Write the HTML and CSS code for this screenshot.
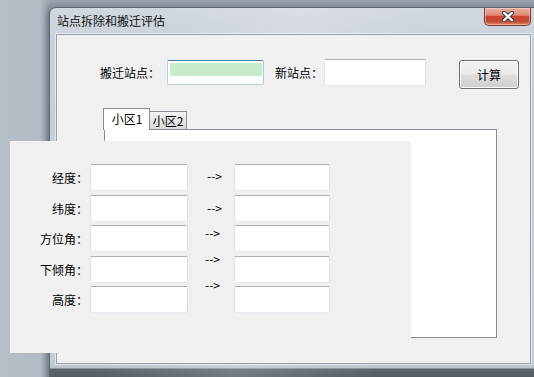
FILE: index.html
```html
<!DOCTYPE html>
<html lang="zh-CN">
<head>
<meta charset="utf-8">
<title>站点拆除和搬迁评估</title>
<link rel="stylesheet" href="styles.css">
</head>
<body>
<div class="window">
  <div class="titlebar">
    <span class="title">站点拆除和搬迁评估</span>
    <div class="close">
      <svg width="14" height="11" viewBox="0 0 14 11">
        <path d="M3 1.8 L11 9.2 M11 1.8 L3 9.2" stroke="#3a3f46" stroke-width="4.2" stroke-linecap="round"/>
        <path d="M3 1.8 L11 9.2 M11 1.8 L3 9.2" stroke="#ffffff" stroke-width="2.2" stroke-linecap="round"/>
      </svg>
    </div>
  </div>
  <div class="client">
    <div class="toprow">
      <span class="lbl lbl-move">搬迁站点：</span>
      <div class="field field-focus"><span class="sel"></span></div>
      <span class="lbl lbl-new">新站点：</span>
      <div class="field field-new"></div>
      <button class="btn">计算</button>
    </div>
    <div class="tabs">
      <div class="tabstrip">
        <div class="tab tab-active">小区1</div>
        <div class="tab tab-idle">小区2</div>
      </div>
      <div class="tabpage"></div>
    </div>
  </div>
</div>
<div class="panel">
  <div class="col-labels">
    <span class="plbl">经度：</span>
    <span class="plbl">纬度：</span>
    <span class="plbl">方位角：</span>
    <span class="plbl">下倾角：</span>
    <span class="plbl">高度：</span>
  </div>
  <div class="col-fields">
    <div class="field pfield"></div>
    <div class="field pfield"></div>
    <div class="field pfield"></div>
    <div class="field pfield"></div>
    <div class="field pfield"></div>
  </div>
  <div class="col-arrows">
    <span class="arrow arrow-1">--&gt;</span>
    <span class="arrow arrow-2">--&gt;</span>
    <span class="arrow arrow-3">--&gt;</span>
    <span class="arrow arrow-4">--&gt;</span>
    <span class="arrow arrow-5">--&gt;</span>
  </div>
  <div class="col-fields col-right">
    <div class="field pfield"></div>
    <div class="field pfield"></div>
    <div class="field pfield"></div>
    <div class="field pfield"></div>
    <div class="field pfield"></div>
  </div>
</div>
</body>
</html>
```

FILE: styles.css
```css
* { box-sizing: border-box; }

html, body {
  margin: 0;
  padding: 0;
}

body {
  width: 534px;
  height: 377px;
  overflow: hidden;
  position: relative;
  background: linear-gradient(90deg, #b6bec8 0px, #b3bbc5 40px, #9aa2ac 49px);
  font-family: "Noto Sans CJK SC", "Noto Sans", sans-serif;
  font-size: 12px;
  color: #000;
}

.window {
  position: absolute;
  left: 49px;
  top: 7px;
  width: 495px;
  height: 375px;
  border: 1px solid #5e6670;
  border-radius: 7px 7px 0 0;
  padding: 0 12px 0 6px;
  background:
    linear-gradient(100deg, rgba(255,255,255,0) 20%, rgba(255,255,255,0.18) 45%, rgba(255,255,255,0) 70%),
    linear-gradient(to bottom, #d2d8df 0px, #c8cfd7 40px, #c5ccd5 352px, #bcc3cb 360px, #5d656e 361px, #4c545c 375px);
  box-shadow: -2px 0 6px rgba(40, 50, 60, 0.45);
}

.titlebar {
  height: 26px;
  display: flex;
  justify-content: space-between;
  align-items: flex-start;
}

.title {
  margin-top: 6px;
  padding-left: 1px;
  line-height: 14px;
  font-size: 12px;
  color: #111;
}

.close {
  width: 47px;
  height: 18px;
  border: 1px solid #7a3a32;
  border-top: none;
  border-radius: 0 0 5px 5px;
  background: linear-gradient(to bottom, #e9b0a2 0%, #dc8a77 42%, #c9462f 50%, #c24a33 78%, #d9856c 100%);
  box-shadow: inset 0 0 0 1px rgba(255, 220, 210, 0.5);
  display: flex;
  align-items: center;
  justify-content: center;
}

.client {
  height: 330px;
  border: 1px solid #97a1ad;
  background: #f0f0f0;
  box-shadow: 0 0 0 1px rgba(255, 255, 255, 0.55);
}

.toprow {
  display: flex;
  align-items: flex-start;
  margin-top: 24px;
  padding-left: 43px;
}

.lbl {
  margin-top: 7px;
  line-height: 14px;
  white-space: nowrap;
}

.lbl-move {
  width: 60px;
  margin-right: 7px;
}

.lbl-new {
  width: 48px;
  margin-left: 11px;
  margin-right: 1px;
}

.field {
  background: #fff;
  border: 1px solid;
  border-color: #abadb3 #dbdfe6 #e3e9ef #e2e3ea;
  border-radius: 2px;
}

.field-focus {
  width: 97px;
  height: 25px;
  margin-top: 1px;
  border-color: #3d7bad #a4c9e3 #b5cfe7 #b5cfe7;
  padding: 2px 0 0 2px;
}

.sel {
  display: block;
  width: 92px;
  height: 13px;
  background: #c8ecca;
}

.field-new {
  width: 102px;
  height: 27px;
}

.btn {
  margin-left: 33px;
  margin-top: 1px;
  width: 60px;
  height: 29px;
  padding: 0;
  border: 1px solid #707070;
  border-radius: 3px;
  background: linear-gradient(to bottom, #f2f2f2 0%, #ebebeb 48%, #dddddd 52%, #cfcfcf 100%);
  box-shadow: inset 0 0 0 1px #fbfbfb;
  font-family: "Noto Sans CJK SC", "Noto Sans", sans-serif;
  font-size: 12px;
  color: #000;
}

.tabs {
  margin-top: 19px;
  margin-left: 47px;
  width: 393px;
}

.tabstrip {
  display: flex;
  align-items: flex-start;
  height: 21px;
  margin-left: -1px;
  position: relative;
  z-index: 1;
}

.tab {
  border: 1px solid #898c95;
  border-bottom: none;
  text-align: center;
  white-space: nowrap;
}

.tab-active {
  width: 47px;
  height: 22px;
  line-height: 20px;
  background: #fff;
  padding-left: 1px;
}

.tab-idle {
  width: 37px;
  height: 18px;
  margin-top: 3px;
  border-left: none;
  line-height: 17px;
  background: linear-gradient(to bottom, #f3f3f3 0%, #e6e6e6 50%, #d9d9d9 100%);
}

.tabpage {
  width: 393px;
  height: 209px;
  border: 1px solid #898c95;
  background: #fff;
}

.panel {
  position: absolute;
  left: 10px;
  top: 141px;
  width: 401px;
  height: 212px;
  background: #f0f0f0;
  display: flex;
  align-items: flex-start;
  padding-top: 23px;
}

.col-labels {
  width: 78px;
  display: flex;
  flex-direction: column;
  gap: 3.5px;
}

.plbl {
  height: 27px;
  line-height: 27px;
  text-align: right;
  white-space: nowrap;
}

.col-fields {
  margin-left: 2px;
  width: 98px;
  display: flex;
  flex-direction: column;
  gap: 3.5px;
}

.pfield {
  height: 27px;
}

.col-arrows {
  width: 46px;
  display: flex;
  flex-direction: column;
  padding-top: 6px;
}

.arrow {
  height: 12px;
  line-height: 12px;
  white-space: nowrap;
}

.arrow-1, .arrow-2 { padding-left: 19px; }
.arrow-3, .arrow-4, .arrow-5 { padding-left: 17px; }
.arrow-2 { margin-top: 20px; }
.arrow-3 { margin-top: 13px; }
.arrow-4, .arrow-5 { margin-top: 14px; }

.col-right {
  margin-left: 0;
  width: 96px;
}
```
